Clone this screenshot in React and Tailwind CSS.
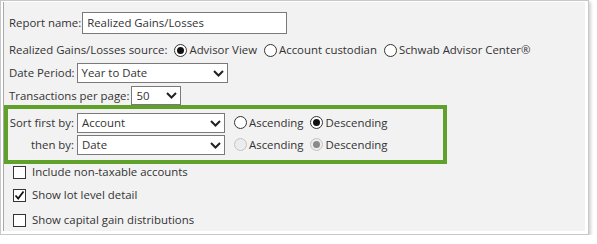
import React from "react";

const Chevron = () => (
  <svg width="11" height="7" viewBox="0 0 11 7" className="shrink-0">
    <path d="M1 1 L5.5 5.5 L10 1" fill="none" stroke="#222" strokeWidth="2" />
  </svg>
);

const Select = ({ value, w }) => (
  <div
    className={`flex items-center justify-between h-full bg-white border border-[#7a7a7a] pl-[4px] pr-[3px] ${w}`}
  >
    <span className="leading-none">{value}</span>
    <Chevron />
  </div>
);

const Radio = ({ checked, disabled, label }) => (
  <div className="flex items-center">
    <div
      className={`w-[13px] h-[13px] rounded-full border flex items-center justify-center ${
        disabled ? "border-[#c4c4c4] bg-[#ececec]" : "border-[#333] bg-white"
      }`}
    >
      {checked && (
        <div
          className={`w-[7px] h-[7px] rounded-full ${
            disabled ? "bg-[#8a8a8a]" : "bg-[#111]"
          }`}
        />
      )}
    </div>
    <span className="ml-[2px]">{label}</span>
  </div>
);

const Checkbox = ({ checked, label }) => (
  <div className="flex items-center h-[16px]">
    <div className="w-[13px] h-[13px] ml-[9px] border border-[#333] bg-white flex items-center justify-center">
      {checked && (
        <svg width="11" height="11" viewBox="0 0 11 11">
          <path d="M1.5 5.5 L4.2 8.5 L9.5 1.5" fill="none" stroke="#111" strokeWidth="1.8" />
        </svg>
      )}
    </div>
    <span className="ml-[6px]">{label}</span>
  </div>
);

export default function App() {
  return (
    <div
      className="w-[589px] h-[235px] bg-white border border-[#c8c8c8] pt-[1px] pl-[2px] pr-[3px] pb-[3px] shadow-[2px_2px_3px_rgba(0,0,0,0.18)] text-[11.4px] text-[#333]"
      style={{ fontFamily: '"Open Sans", "Noto Sans", sans-serif' }}
    >
      <div className="h-full bg-[#f2f2f2] border-l border-[#a8a8a8] pt-[10px] flex flex-col">
        {/* Report name */}
        <div className="flex items-center h-[22px] pl-[5px]">
          <span>Report name:</span>
          <div className="ml-[1px] h-full w-[205px] bg-white border border-[#7a7a7a] flex items-center pl-[4px]">
            Realized Gains/Losses
          </div>
        </div>
        {/* Source */}
        <div className="flex items-center h-[16px] mt-[8px] pl-[5px]">
          <span>Realized Gains/Losses source:</span>
          <div className="ml-[7px] flex items-center gap-[7px]">
            <Radio checked label="Advisor View" />
            <Radio label="Account custodian" />
            <Radio label="Schwab Advisor Center®" />
          </div>
        </div>
        {/* Date period */}
        <div className="flex items-center h-[20px] mt-[5px] pl-[5px]">
          <span>Date Period:</span>
          <div className="ml-[2px] h-full">
            <Select value="Year to Date" w="w-[151px]" />
          </div>
        </div>
        {/* Transactions */}
        <div className="flex items-center h-[19px] mt-[3px] pl-[5px]">
          <span>Transactions per page:</span>
          <div className="ml-[2px] h-full">
            <Select value="50" w="w-[50px]" />
          </div>
        </div>
        {/* Sort box */}
        <div className="w-[443px] h-[59px] border-4 border-[#5fa12a] pt-[4px] flex flex-col">
          <div className="flex items-center h-[20px]">
            <span className="w-[66px] text-right">Sort first by:</span>
            <div className="ml-[3px] h-full">
              <Select value="Account" w="w-[148px]" />
            </div>
            <div className="ml-[9px] flex items-center gap-[7px]">
              <Radio label="Ascending" />
              <Radio checked label="Descending" />
            </div>
          </div>
          <div className="flex items-center h-[20px] mt-[2px]">
            <span className="w-[66px] text-right">then by:</span>
            <div className="ml-[3px] h-full">
              <Select value="Date" w="w-[148px]" />
            </div>
            <div className="ml-[9px] flex items-center gap-[7px]">
              <Radio disabled label="Ascending" />
              <Radio disabled checked label="Descending" />
            </div>
          </div>
        </div>
        <div className="mt-0">
          <Checkbox label="Include non-taxable accounts" />
        </div>
        <div className="mt-[7px]">
          <Checkbox checked label="Show lot level detail" />
        </div>
        <div className="mt-[9px]">
          <Checkbox label="Show capital gain distributions" />
        </div>
      </div>
    </div>
  );
}
